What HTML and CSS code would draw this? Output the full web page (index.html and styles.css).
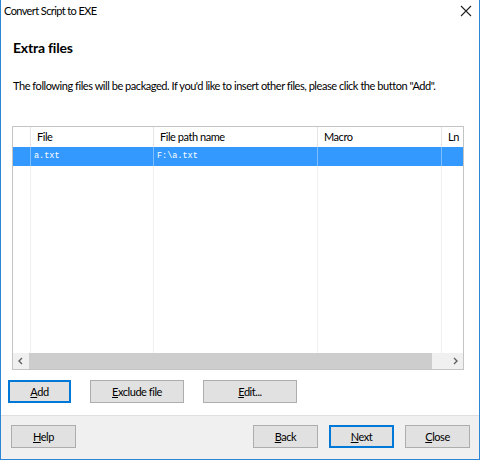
FILE: index.html
```html
<!DOCTYPE html>
<html lang="en">
<head>
    <meta charset="UTF-8">
    <title>Convert Script to EXE</title>
    <link rel="stylesheet" href="styles.css">
</head>
<body>
    <div class="window">
        <div class="titlebar">
            <span class="title">Convert Script to EXE</span>
            <svg class="close" width="12" height="12" viewBox="0 0 12 12">
                <path d="M1 1 L11 11 M11 1 L1 11" stroke="#222" stroke-width="1.1"/>
            </svg>
        </div>

        <div class="content">
            <h1>Extra files</h1>
            <p class="desc">The following files will be packaged. If you'd like to insert other files, please click the button "Add".</p>

            <div class="listbox">
                <div class="columns">
                    <div class="col c0">
                        <div class="hcell"></div>
                        <div class="rcell"></div>
                        <div class="fill"></div>
                    </div>
                    <div class="col c1">
                        <div class="hcell">File</div>
                        <div class="rcell mono">a.txt</div>
                        <div class="fill"></div>
                    </div>
                    <div class="col c2">
                        <div class="hcell">File path name</div>
                        <div class="rcell mono">F:\a.txt</div>
                        <div class="fill"></div>
                    </div>
                    <div class="col c3">
                        <div class="hcell">Macro</div>
                        <div class="rcell"></div>
                        <div class="fill"></div>
                    </div>
                    <div class="col c4 last">
                        <div class="hcell">Ln</div>
                        <div class="rcell"></div>
                        <div class="fill"></div>
                    </div>
                </div>
                <div class="hscroll">
                    <div class="arrow">
                        <svg width="16" height="16" viewBox="0 0 16 16"><path d="M9 5 L6 8 L9 11" fill="none" stroke="#606060" stroke-width="1.4"/></svg>
                    </div>
                    <div class="track"><div class="thumb"></div></div>
                    <div class="arrow">
                        <svg width="16" height="16" viewBox="0 0 16 16"><path d="M7 5 L10 8 L7 11" fill="none" stroke="#606060" stroke-width="1.4"/></svg>
                    </div>
                </div>
            </div>

            <div class="actions">
                <button class="btn focus w63"><u>A</u>dd</button>
                <button class="btn w94"><u>E</u>xclude file</button>
                <button class="btn w94"><u>E</u>dit...</button>
            </div>
        </div>

        <div class="footer">
            <button class="btn"><u>H</u>elp</button>
            <div class="spacer"></div>
            <button class="btn"><u>B</u>ack</button>
            <button class="btn focus"><u>N</u>ext</button>
            <button class="btn"><u>C</u>lose</button>
        </div>
    </div>
</body>
</html>
```

FILE: styles.css
```css
body {
    margin: 0;
    font-family: Lato, sans-serif;
    font-size: 11px;
    letter-spacing: -0.45px;
    color: #000;
    background: #fff;
}

.window {
    width: 480px;
    height: 460px;
    box-sizing: border-box;
    border: 1px solid #2b87d3;
    border-top: none;
    display: flex;
    flex-direction: column;
}

.titlebar {
    height: 30px;
    box-sizing: border-box;
    display: flex;
    align-items: center;
    justify-content: space-between;
    padding: 0 8px 8px 3px;
    background: #fff;
}

.title {
    font-size: 11px;
    line-height: 16px;
    letter-spacing: -0.6px;
}

.close {
    margin-right: -1px;
}

.content {
    flex: 1;
    background: #fff;
    padding: 9px 11px 0 11px;
}

h1 {
    margin: 0;
    padding-left: 1px;
    font-size: 14px;
    line-height: 18px;
    font-weight: bold;
    letter-spacing: -0.2px;
}

.desc {
    margin: 21px 0 0 0;
    padding-left: 1px;
    line-height: 16px;
    white-space: nowrap;
}

/* file list */
.listbox {
    margin-top: 32px;
    width: 452px;
    height: 244px;
    box-sizing: border-box;
    border: 1px solid #c4c4c4;
    display: flex;
    flex-direction: column;
}

.columns {
    flex: 1;
    display: grid;
    grid-template-columns: 18px 123px 164px 124px 1fr;
    overflow: hidden;
}

.col {
    display: flex;
    flex-direction: column;
    min-width: 0;
}

.hcell {
    height: 20px;
    line-height: 20px;
    padding-left: 6px;
    border-right: 1px solid #e5e5e5;
    white-space: nowrap;
    overflow: hidden;
}

.rcell {
    height: 19px;
    line-height: 19px;
    padding-left: 3px;
    background: #3399ff;
    color: #fff;
    border-right: 1px solid #7fbdfb;
    white-space: nowrap;
}

.fill {
    flex: 1;
    border-right: 1px solid #f0f0f0;
}

.last .hcell,
.last .rcell,
.last .fill {
    border-right: none;
}

.mono {
    font-family: "Liberation Mono", monospace;
    font-size: 8.5px;
    letter-spacing: 0;
}

.hscroll {
    height: 16px;
    display: flex;
    background: #f0f0f0;
}

.arrow {
    width: 16px;
    height: 16px;
}

.track {
    flex: 1;
    display: flex;
}

.thumb {
    width: 403px;
    background: #cdcdcd;
}

/* buttons */
.btn {
    width: 65px;
    height: 23px;
    padding: 0;
    box-sizing: border-box;
    background: #e1e1e1;
    border: 1px solid #adadad;
    font-family: Lato, sans-serif;
    font-size: 11px;
    letter-spacing: -0.45px;
    color: #000;
}

.btn.focus {
    border: 2px solid #0078d7;
}

.w63 {
    width: 63px;
}

.w94 {
    width: 94px;
}

.actions {
    display: flex;
    gap: 19px;
    margin: 10px 0 0 -4px;
}

.footer {
    height: 44px;
    box-sizing: border-box;
    border-top: 1px solid #dfdfdf;
    background: #f0f0f0;
    display: flex;
    align-items: flex-start;
    gap: 11px;
    padding: 9px 9px 0 10px;
}

.spacer {
    flex: 1;
}
```
